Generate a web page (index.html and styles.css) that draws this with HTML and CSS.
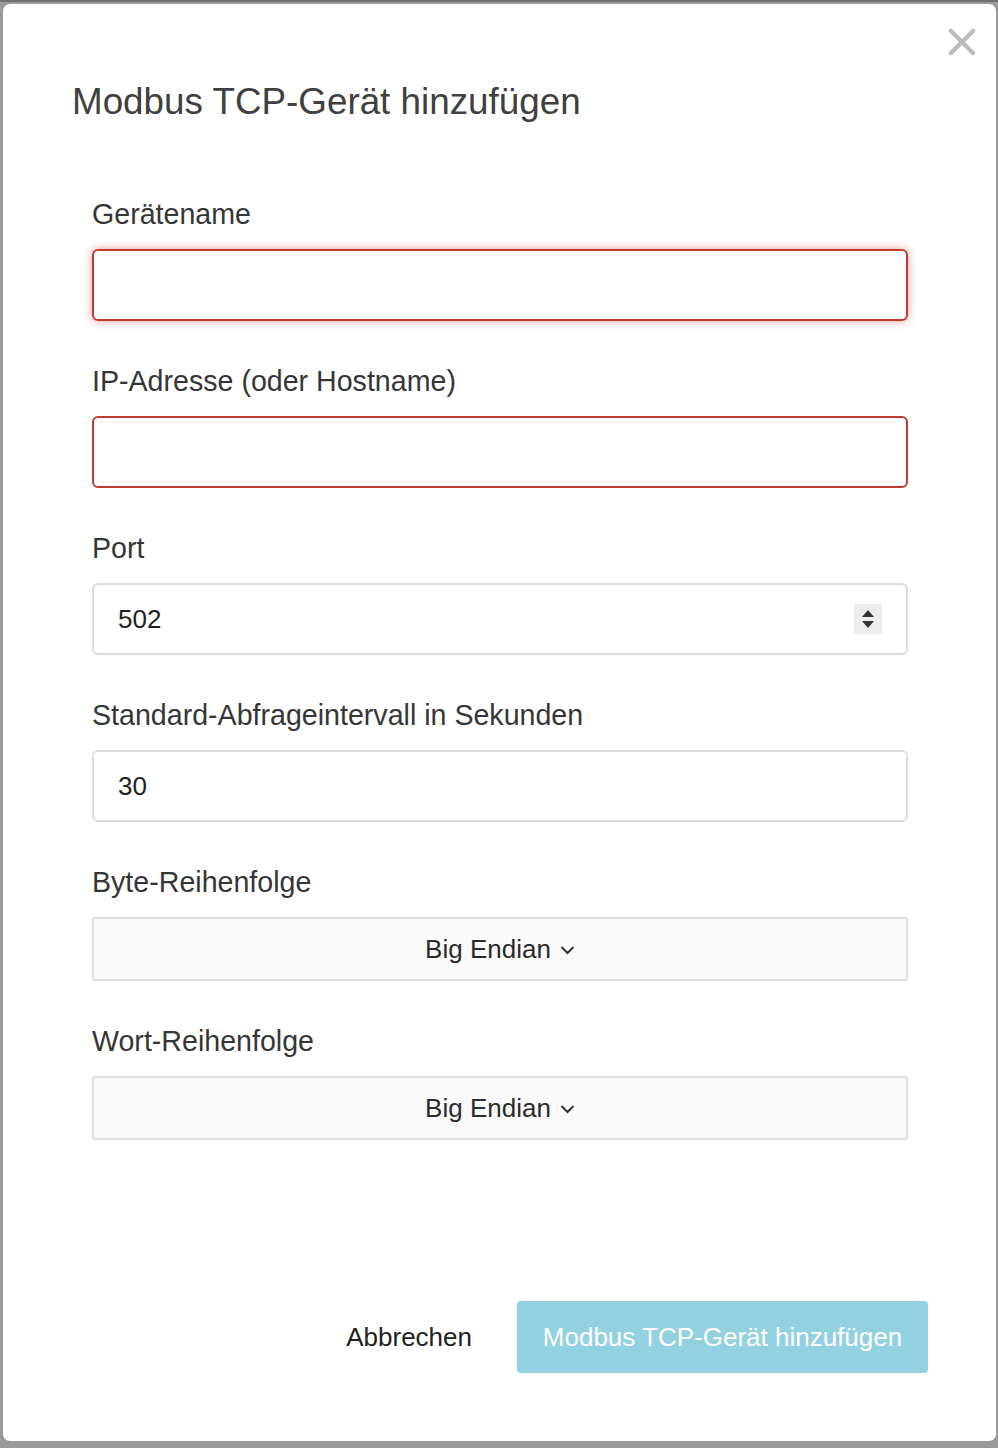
FILE: index.html
```html
<!DOCTYPE html>
<html lang="de">
<head>
<meta charset="utf-8">
<title>Modbus TCP-Gerät hinzufügen</title>
<link rel="stylesheet" href="styles.css">
</head>
<body>
<div class="backdrop">
  <div class="modal">
    <button class="close" aria-label="Schließen">
      <svg width="28" height="28" viewBox="0 0 28 28"><path d="M3 3 L25 25 M25 3 L3 25" stroke="#bdbdbd" stroke-width="4.5" stroke-linecap="round"/></svg>
    </button>
    <h1 class="title">Modbus TCP-Gerät hinzufügen</h1>
    <form class="form">
      <div class="field">
        <label class="label">Gerätename</label>
        <div class="input invalid focused"></div>
      </div>
      <div class="field">
        <label class="label">IP-Adresse (oder Hostname)</label>
        <div class="input invalid"></div>
      </div>
      <div class="field">
        <label class="label">Port</label>
        <div class="input">
          <span class="value">502</span>
          <span class="spinner">
            <svg width="28" height="30" viewBox="0 0 28 30"><rect width="28" height="30" fill="#ececec"/><path d="M8 13 L14 6 L20 13 Z M8 17 L20 17 L14 24 Z" fill="#333"/></svg>
          </span>
        </div>
      </div>
      <div class="field">
        <label class="label">Standard-Abfrageintervall in Sekunden</label>
        <div class="input"><span class="value">30</span></div>
      </div>
      <div class="field">
        <label class="label">Byte-Reihenfolge</label>
        <div class="select">Big Endian<svg class="chev" width="15" height="10" viewBox="0 0 15 10"><path d="M1.5 2 L7.5 8 L13.5 2" fill="none" stroke="#333" stroke-width="2"/></svg></div>
      </div>
      <div class="field">
        <label class="label">Wort-Reihenfolge</label>
        <div class="select">Big Endian<svg class="chev" width="15" height="10" viewBox="0 0 15 10"><path d="M1.5 2 L7.5 8 L13.5 2" fill="none" stroke="#333" stroke-width="2"/></svg></div>
      </div>
    </form>
    <div class="footer">
      <button class="btn-link" type="button">Abbrechen</button>
      <button class="btn-primary" type="button">Modbus TCP-Gerät hinzufügen</button>
    </div>
  </div>
</div>
</body>
</html>
```

FILE: styles.css
```css
html, body {
  margin: 0;
  padding: 0;
}
body {
  background: #9a9a9a;
  font-family: "Liberation Sans", Arial, sans-serif;
  color: #333;
  width: 998px;
  height: 1448px;
  overflow: hidden;
}
.backdrop {
  border-top: 2px solid #6f6f6f;
  padding: 2px 2px 0 3px;
}
.modal {
  position: relative;
  box-sizing: border-box;
  background: #fff;
  border-radius: 7px;
  height: 1437px;
  display: flex;
  flex-direction: column;
  padding: 76px 0 0 0;
}
.close {
  position: absolute;
  top: 24px;
  right: 20px;
  width: 28px;
  height: 28px;
  padding: 0;
  border: 0;
  background: none;
}
.close svg { display: block; }
.title {
  margin: 0 0 0 69px;
  font-size: 36.8px;
  line-height: 44px;
  font-weight: normal;
  color: #404040;
}
.form {
  margin: 73px 88px 0 89px;
  display: flex;
  flex-direction: column;
  gap: 43px;
}
.field {
  display: flex;
  flex-direction: column;
}
.label {
  font-size: 28.6px;
  line-height: 34px;
  margin-bottom: 18px;
  color: #363636;
}
.input {
  box-sizing: border-box;
  height: 72px;
  border: 2px solid #dcdcdc;
  border-radius: 6px;
  display: flex;
  align-items: center;
  padding: 0 24px;
  font-size: 26px;
  color: #222;
}
.input.invalid {
  border-color: #c2392e;
}
.input.focused {
  box-shadow: 0 0 8px rgba(194, 57, 46, 0.5);
}
.value { flex: 1; }
.spinner {
  display: flex;
}
.spinner svg { display: block; }
.select {
  box-sizing: border-box;
  height: 64px;
  border: 2px solid #dedede;
  border-radius: 3px;
  background: #fafafa;
  display: flex;
  align-items: center;
  justify-content: center;
  gap: 9px;
  font-size: 26px;
  color: #2b2b2b;
}
.chev { display: block; margin-top: 2px; }
.footer {
  margin-top: auto;
  display: flex;
  justify-content: flex-end;
  align-items: center;
  gap: 45px;
  padding: 0 68px 68px 0;
}
.btn-link {
  border: 0;
  background: none;
  font-family: inherit;
  font-size: 26px;
  color: #222;
  padding: 0;
}
.btn-primary {
  box-sizing: border-box;
  height: 72px;
  width: 411px;
  border: 0;
  border-radius: 4px;
  background: #93d1e1;
  color: #fff;
  font-family: inherit;
  font-size: 26px;
  padding: 0 24px;
}
```
